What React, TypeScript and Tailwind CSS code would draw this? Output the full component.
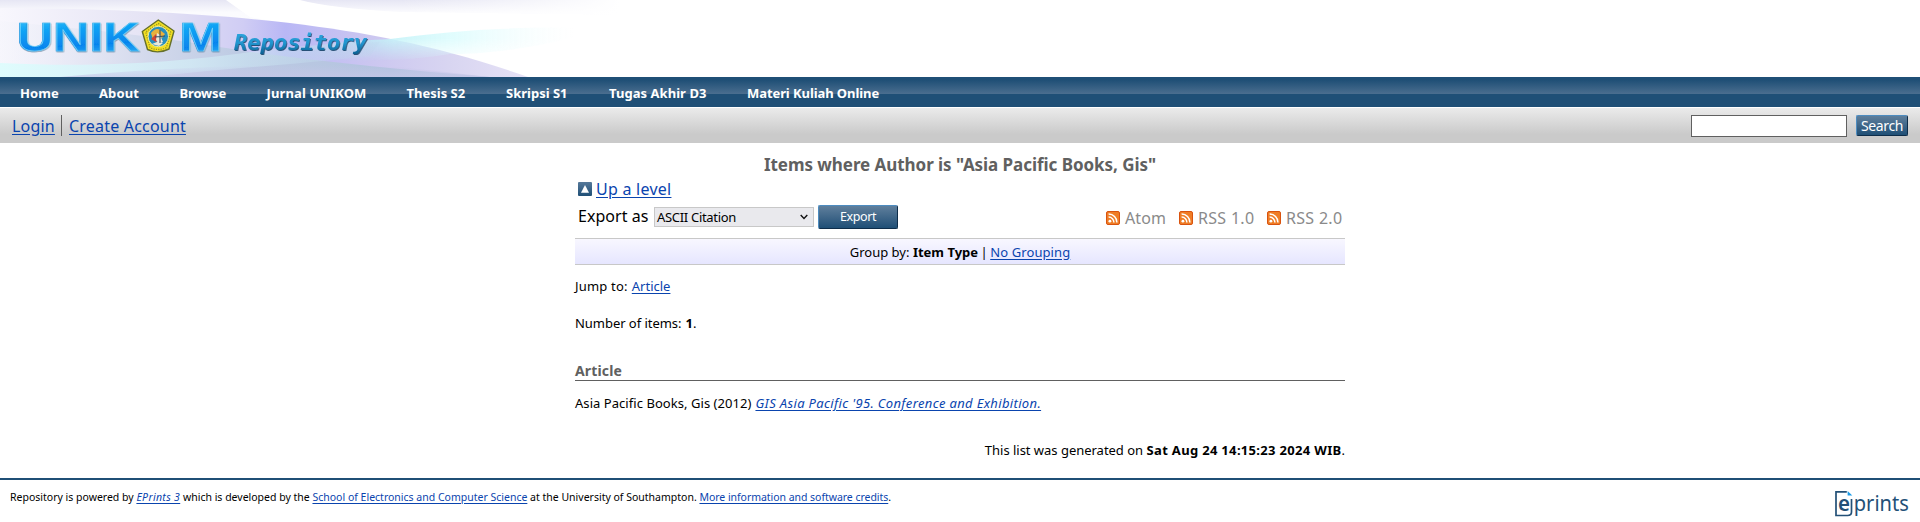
import React from "react";

const link = "text-[#0a44ae] underline underline-offset-2";

const nav: [string, string][] = [
  ["Home", "w-[39px] tracking-[0.12px]"],
  ["About", "w-[40.5px] tracking-[0.1px]"],
  ["Browse", "w-[47px] tracking-[-0.15px]"],
  ["Jurnal UNIKOM", "w-[100px] tracking-[0.12px]"],
  ["Thesis S2", "w-[59.5px] tracking-[0px]"],
  ["Skripsi S1", "w-[63px] tracking-[0px]"],
  ["Tugas Akhir D3", "w-[98px] tracking-[0.05px]"],
  ["Materi Kuliah Online", "w-[132px] tracking-[-0.08px]"],
];

function Banner() {
  return (
    <svg width="680" height="77" viewBox="0 0 680 77" className="block shrink-0" role="img" aria-label="UNIKOM Repository">
      <defs>
        <linearGradient id="sky" x1="0" y1="0" x2="0" y2="1">
          <stop offset="0" stopColor="#e6e6f4" />
          <stop offset=".16" stopColor="#fbfbfe" />
          <stop offset="1" stopColor="#fff" />
        </linearGradient>
        <linearGradient id="fade" x1="0" x2="1">
          <stop offset="0" stopColor="#fff" stopOpacity="0" />
          <stop offset="1" stopColor="#fff" />
        </linearGradient>
        <linearGradient id="violet" x1="0" x2="1">
          <stop offset="0" stopColor="#f8f7fd" />
          <stop offset=".3" stopColor="#e4e2f4" />
          <stop offset=".46" stopColor="#d0cdf4" />
          <stop offset=".54" stopColor="#b9b7f5" />
          <stop offset=".7" stopColor="#cbc6f0" />
          <stop offset=".85" stopColor="#d8d5f1" />
          <stop offset="1" stopColor="#e6e2f6" />
        </linearGradient>
        <linearGradient id="steel" x1="0" x2="1">
          <stop offset="0" stopColor="#f3f4fb" stopOpacity=".3" />
          <stop offset=".3" stopColor="#d3d9ec" />
          <stop offset=".5" stopColor="#bccae3" />
          <stop offset=".8" stopColor="#b3c3df" />
          <stop offset="1" stopColor="#c5cbe8" />
        </linearGradient>
        <linearGradient id="cyan" x1="0" x2="1">
          <stop offset="0" stopColor="#b9dff0" stopOpacity="0" />
          <stop offset=".25" stopColor="#b5e2f0" stopOpacity=".6" />
          <stop offset=".42" stopColor="#c6f3f8" stopOpacity=".9" />
          <stop offset=".6" stopColor="#dcfcfd" stopOpacity=".85" />
          <stop offset=".95" stopColor="#f2fdfe" stopOpacity="0" />
        </linearGradient>
        <linearGradient id="cyanmask" x1="0" y1="0" x2="0" y2="1">
          <stop offset="0" stopColor="#fff" />
          <stop offset=".35" stopColor="#fff" />
          <stop offset="1" stopColor="#000" />
        </linearGradient>
        <mask id="ribbon"><rect x="240" y="26" width="360" height="36" fill="url(#cyanmask)" /></mask>
        <linearGradient id="aqua" x1="0" x2="1">
          <stop offset="0" stopColor="#dffcfd" />
          <stop offset=".5" stopColor="#d2ebf5" stopOpacity=".8" />
          <stop offset="1" stopColor="#bcd4ea" stopOpacity=".2" />
        </linearGradient>
        <linearGradient id="haze" x1="0" y1="0" x2="0" y2="1">
          <stop offset="0" stopColor="#c6c6e8" stopOpacity="0" />
          <stop offset="1" stopColor="#c6c6e8" stopOpacity=".7" />
        </linearGradient>
        <linearGradient id="letters" x1="0" y1="0" x2=".15" y2="1">
          <stop offset="0" stopColor="#4fd0fb" />
          <stop offset=".35" stopColor="#12a6f5" />
          <stop offset=".75" stopColor="#0685ee" />
          <stop offset="1" stopColor="#2cb0f5" />
        </linearGradient>
        <linearGradient id="word" x1="0" y1="0" x2="0" y2="1">
          <stop offset="0" stopColor="#2fa6de" />
          <stop offset=".5" stopColor="#2196cf" />
          <stop offset="1" stopColor="#0b5a8c" />
        </linearGradient>
        <filter id="bevel" x="-5%" y="-20%" width="110%" height="150%">
          <feDropShadow dx=".8" dy="1" stdDeviation=".6" floodColor="#053259" floodOpacity=".8" />
        </filter>
        <filter id="soft" x="-5%" y="-20%" width="110%" height="150%">
          <feDropShadow dx=".5" dy=".8" stdDeviation=".6" floodColor="#31587c" floodOpacity=".6" />
        </filter>
      </defs>
      <rect width="680" height="77" fill="url(#sky)" />
      <rect x="400" width="220" height="77" fill="url(#fade)" />
      <rect x="619" width="61" height="77" fill="#fff" />
      <path d="M226 0 H300 Q330 8 400 12 L620 15 V77 H400 L340 34 L250 17 Z" fill="#fff" />
      <path d="M0 8 C120 9 200 13 290 23 C370 33 440 46 528 77 H0Z" fill="url(#violet)" />
      <path d="M0 21 C150 35 190 42 250 52 C330 62 410 71 490 77 H0Z" fill="url(#steel)" />
      <path d="M250 58 C310 44 350 41 390 39 C450 31 510 26 590 28 C590 38 500 55 450 54 C390 64 330 61 250 58Z" fill="url(#cyan)" mask="url(#ribbon)" />
      <path d="M0 63 C100 68 180 62 250 52 C290 46 330 44 380 42 L370 56 C300 64 220 69 150 77 H0Z" fill="url(#aqua)" />
      <path d="M60 77 C180 66 290 62 400 67 L490 77Z" fill="url(#haze)" />

      <g fontFamily="'Liberation Sans', sans-serif" fontWeight="700" fontSize="41.5" filter="url(#soft)">
        <g fill="url(#letters)" stroke="#1c93e0" strokeWidth=".5">
          <text x="16.5" y="51" textLength="123" lengthAdjust="spacingAndGlyphs">UNIK</text>
          <text x="179" y="51" textLength="43" lengthAdjust="spacingAndGlyphs">M</text>
        </g>
        <g fill="none" stroke="#8fe4ff" strokeWidth=".7" opacity=".75">
          <text x="17.3" y="50.6" textLength="122.5" lengthAdjust="spacingAndGlyphs">UNIK</text>
          <text x="179.8" y="50.6" textLength="42.5" lengthAdjust="spacingAndGlyphs">M</text>
        </g>
      </g>
      <g strokeLinejoin="round">
        <path d="M158.3 20 L174 31 L169 49 Q158 54.5 147.5 49.5 L142.3 31.5Z" fill="#f2df22" stroke="#65702c" strokeWidth="1.4" />
        <path d="M158.3 23.5 L170.7 32 L166.5 47.5 Q158 51.5 150 47.5 L145.7 32Z" fill="none" stroke="#9c9426" strokeWidth="1.3" strokeDasharray="1.2 1.2" />
        <circle cx="158.3" cy="36.5" r="10.2" fill="#278fbf" stroke="#efe9a0" strokeWidth="1" />
        <path d="M151 33 q5-6 9-3 l5 4 -3 4 -5-2 -4 4z" fill="#e9b03c" />
        <path d="M151 39 l5-5 3 5 -3 3z" fill="#d24335" />
        <path d="M157 33 l3 2 3 7 -4 2 -3-4z M152 44 l5-2 6 1 -4 3z" fill="#ece7d8" />
        <path d="M160 30 v13 M155 37 l10-1" stroke="#31506a" strokeWidth="1.1" fill="none" />
      </g>
      <text
        x="234" y="50" textLength="133" lengthAdjust="spacingAndGlyphs"
        fontFamily="'DejaVu Sans Mono', monospace" fontStyle="italic" fontWeight="700" fontSize="21"
        fill="url(#word)" filter="url(#bevel)"
      >Repository</text>
    </svg>
  );
}

function FeedIcon() {
  return (
    <svg width="14" height="14" viewBox="0 0 14 14" className="shrink-0">
      <rect x=".5" y=".5" width="13" height="13" rx="1.5" fill="#ef7d26" stroke="#d9530f" />
      <circle cx="3.9" cy="10.2" r="1.4" fill="#fff" />
      <path d="M2.6 6.1 a5.2 5.2 0 0 1 5.3 5.4 M2.6 3.1 a8.2 8.2 0 0 1 8.3 8.4" fill="none" stroke="#fff" strokeWidth="1.5" />
    </svg>
  );
}

function EprintsLogo() {
  return (
    <svg width="80" height="40" viewBox="0 -8 80 40" className="shrink-0">
      <path d="M12.8 1.8 H2 V25.5 H13.5 Q17.5 25.5 17.5 22 V9" fill="none" stroke="#235077" strokeWidth="1.7" />
      <path d="M13.6 1 V5.6 H18.3Z" fill="#1b9be8" />
      <g fontFamily="'Noto Sans', sans-serif" fill="#235077">
        <text x="4" y="20.5" fontSize="21" fontWeight="600" textLength="12" lengthAdjust="spacingAndGlyphs">e</text>
        <text x="19.8" y="20.8" fontSize="21" fontWeight="400" textLength="55" lengthAdjust="spacingAndGlyphs">prints</text>
      </g>
    </svg>
  );
}

const button =
  "flex shrink-0 items-center justify-center rounded-[2px] border border-t-[#4d8cc0] border-l-[#4d8cc0] border-r-[#0e2d4a] border-b-[#0e2d4a] bg-linear-to-b from-[#5f7f9c] to-[#1f4f76] text-white";

export default function App() {
  return (
    <div className="flex h-[522px] w-[1920px] flex-col overflow-hidden bg-white font-['Noto_Sans',sans-serif] text-[13px] whitespace-nowrap text-black">
      <header className="flex h-[77px] shrink-0"><Banner /></header>

      <nav className="flex h-[30px] shrink-0 items-center gap-10 bg-[linear-gradient(to_bottom,#1f4f76_0,#1f4f76_3px,#4b6e8f_17px,#1f4f76_17px)] pt-[2px] pl-5 text-[13px] leading-7 font-bold text-white">
        {nav.map(([label, cls]) => <a key={label} className={cls}>{label}</a>)}
      </nav>

      <div className="mt-px flex h-[35px] shrink-0 items-center justify-between bg-linear-to-b from-[#ebebeb] to-[#cacaca] to-75% pr-3 pl-3">
        <div className="flex items-center text-base">
          <a className={`${link} w-[49px] tracking-[0.2px]`}>Login</a>
          <span className="mr-[7px] h-[21px] w-px bg-[#606060]" />
          <a className={`${link} tracking-[0.2px]`}>Create Account</a>
        </div>
        <div className="flex items-center gap-[9px]">
          <input aria-label="Search" className="h-[22px] w-[156px] border border-[#606060] bg-white" />
          <button className={`${button} h-[21px] w-[52px] text-sm tracking-[-0.38px]`}>Search</button>
        </div>
      </div>

      <main className="mx-auto flex h-[335px] w-[770px] shrink-0 flex-col">
        <h1 className="mt-[10px] h-6 text-center text-[17px] leading-6 font-bold tracking-[-0.05px] text-[#606060]">
          Items where Author is "Asia Pacific Books, Gis"
        </h1>
        <div className="flex h-6 items-center gap-1 pl-[3px] text-base">
          <svg width="14" height="14" viewBox="0 0 14 14">
            <defs>
              <linearGradient id="upfill" x1="0" y1="0" x2="0" y2="1">
                <stop offset="0" stopColor="#56799a" /><stop offset="1" stopColor="#1f4f76" />
              </linearGradient>
            </defs>
            <rect width="14" height="14" rx="1" fill="url(#upfill)" />
            <path d="M7 3 L11 10.8 H3Z" fill="#fff" />
          </svg>
          <a className={`${link} tracking-[0.25px]`}>Up a level</a>
        </div>
        <div className="mb-[5px] flex h-8 items-center pl-[3px]">
          <span className="-mt-[2px] w-[76px] text-base tracking-[0.05px]">Export as</span>
          <div className="flex h-5 w-40 items-center justify-between border border-[#c8c8c8] bg-[#e9e9ed] pr-[5px] pl-[2px]">
            <span className="mt-px tracking-[-0.31px]">ASCII Citation</span>
            <svg width="8" height="6" viewBox="0 0 8 6"><path d="M.7 1 L4 4.4 L7.3 1" fill="none" stroke="#111" strokeWidth="1.4" /></svg>
          </div>
          <button className={`${button} ml-1 h-6 w-20 pt-px text-[12.5px] tracking-[-0.4px]`}>Export</button>
          <div className="mt-[2px] ml-auto flex items-center pr-[3px] text-base leading-5 text-[#8a8a8a]">
            <FeedIcon /><span className="-mt-px ml-[5px] w-[54px] tracking-[0.1px]">Atom</span>
            <FeedIcon /><span className="-mt-px ml-[5px] w-[69px] tracking-[0.3px]">RSS 1.0</span>
            <FeedIcon /><span className="-mt-px ml-[5px] w-[56px] tracking-[0.3px]">RSS 2.0</span>
          </div>
        </div>
        <div className="flex h-[27px] items-center justify-center gap-[3.5px] border-y border-[#c8c8c8] bg-linear-to-b from-[#f8f7ff] to-[#e6e6ff] pt-[2px]">
          <span>Group by:</span><b>Item Type</b><span className="-mx-px">|</span>
          <a className={`${link} tracking-[0.1px]`}>No Grouping</a>
        </div>
        <p className="mt-[12px] flex h-5 items-center gap-1">
          <span className="tracking-[0.2px]">Jump to:</span><a className={link}>Article</a>
        </p>
        <p className="mt-[17px] flex h-5 items-center gap-1">
          <span className="tracking-[-0.04px]">Number of items:</span><b>1<span className="font-normal">.</span></b>
        </p>
        <h2 className="mt-[26px] flex h-[21px] shrink-0 items-center border-b border-[#606060] pt-[2px] text-sm font-bold tracking-[0.15px] text-[#606060]">Article</h2>
        <p className="mt-[13px] flex h-5 items-center gap-1">
          <span className="tracking-[0.05px]">Asia Pacific Books, Gis (2012)</span>
          <a className={`${link} tracking-[0.35px] italic`}>GIS Asia Pacific '95. Conference and Exhibition.</a>
        </p>
        <p className="mt-[27px] flex h-5 items-center justify-end gap-[3.5px]">
          <span className="tracking-[-0.02px]">This list was generated on</span>
          <span><b className="tracking-[0.32px]">Sat Aug 24 14:15:23 2024 WIB</b>.</span>
        </p>
      </main>

      <footer className="flex h-[44px] shrink-0 items-start justify-between border-t-2 border-[#1f4f76] pr-[6px] pl-[10px] text-[10.5px]">
        <p className="mt-[9px] leading-4">
          Repository is powered by <a className={`${link} tracking-[0.33px] italic`}>EPrints 3</a> which is developed by the{" "}
          <a className={link}>School of Electronics and Computer Science</a> at the University of Southampton.{" "}
          <a className={`${link} tracking-[-0.04px]`}>More information and software credits</a>.
        </p>
        <span className="mt-[2px]"><EprintsLogo /></span>
      </footer>
    </div>
  );
}
